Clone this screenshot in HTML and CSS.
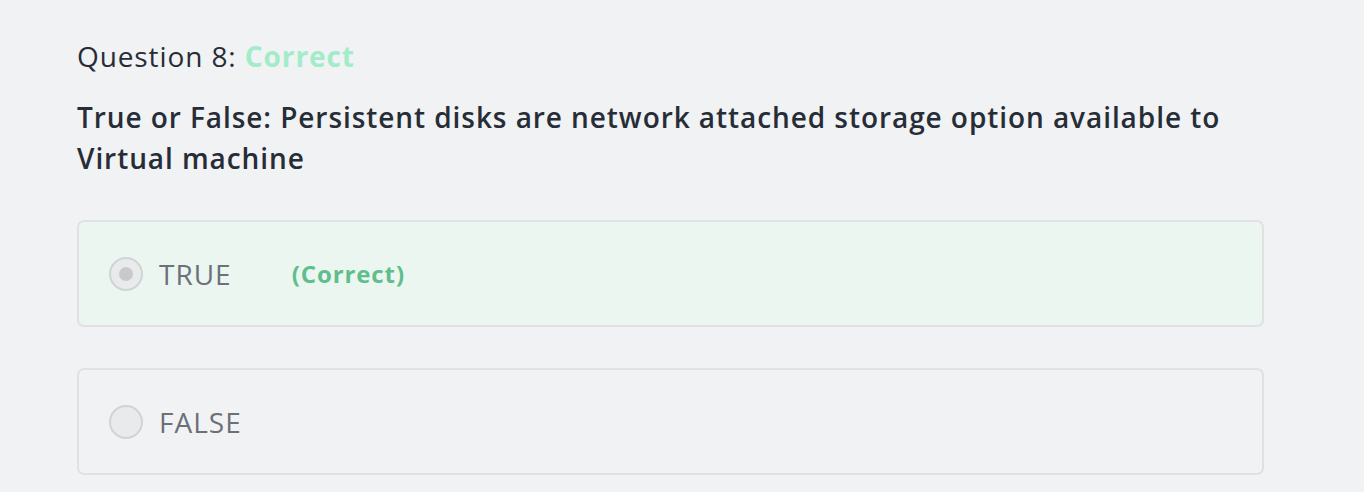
FILE: index.html
```html
<!DOCTYPE html>
<html>
<head>
<meta charset="utf-8">
<link rel="stylesheet" href="styles.css">
</head>
<body>
<div class="quiz">
  <div class="q-status">Question 8: <span class="ok">Correct</span></div>
  <div class="q-text">True or False: Persistent disks are network attached storage option available to Virtual machine</div>
  <div class="options">
    <div class="option correct">
      <span class="radio checked"></span>
      <span class="label">TRUE</span>
      <span class="tag">(Correct)</span>
    </div>
    <div class="option">
      <span class="radio"></span>
      <span class="label">FALSE</span>
    </div>
  </div>
</div>
</body>
</html>
```
FILE: styles.css
```css
html, body {
  margin: 0;
  padding: 0;
  background: #f1f2f4;
  font-family: "Open Sans", "Noto Sans", sans-serif;
}
.quiz {
  padding: 36px 100px 0 77px;
}
.q-status {
  font-size: 28px;
  line-height: 40px;
  letter-spacing: 0.9px;
  color: #272d37;
}
.q-status .ok {
  color: #a2ecc9;
  font-weight: 700;
}
.q-text {
  margin-top: 21px;
  font-size: 28px;
  line-height: 41px;
  font-weight: 600;
  letter-spacing: 0.93px;
  color: #272d37;
  max-width: 1187px;
}
.options {
  margin-top: 41px;
  width: 1187px;
  display: flex;
  flex-direction: column;
  gap: 41px;
}
.option {
  box-sizing: border-box;
  height: 107px;
  border: 2px solid #dfe1e4;
  border-radius: 7px;
  display: flex;
  align-items: center;
  padding-left: 30px;
}
.option.correct {
  background: #ebf6f0;
}
.radio {
  box-sizing: border-box;
  width: 34px;
  height: 34px;
  border-radius: 50%;
  border: 2px solid #d2d3d6;
  background: #e9eaec;
  display: flex;
  align-items: center;
  justify-content: center;
}
.radio.checked::after {
  content: "";
  width: 14px;
  height: 14px;
  border-radius: 50%;
  background: #c8c9cc;
}
.label {
  margin-left: 16px;
  font-size: 28px;
  letter-spacing: 1px;
  color: #6b7079;
}
.tag {
  margin-left: 60px;
  font-size: 24px;
  font-weight: 700;
  letter-spacing: 0.9px;
  color: #5fbe8c;
}
```
